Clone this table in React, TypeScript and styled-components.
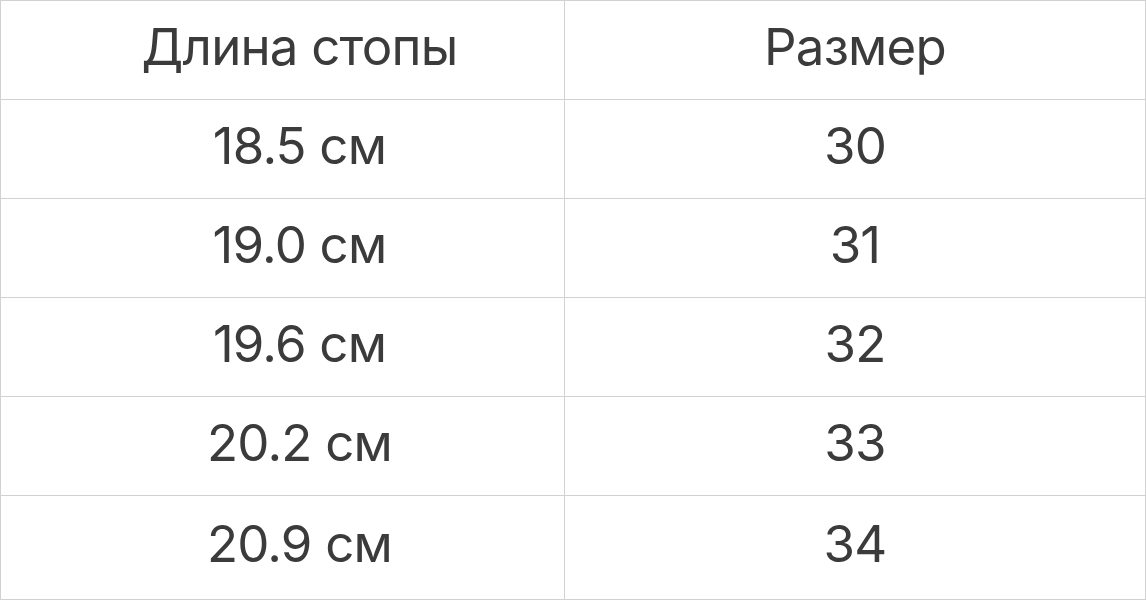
import React from 'react';
import styled, { createGlobalStyle } from 'styled-components';

const GlobalStyle = createGlobalStyle`
  html, body {
    margin: 0;
    padding: 0;
    background: #ffffff;
  }
  body {
    font-family: Inter, "Liberation Sans", sans-serif;
  }
`;

const Table = styled.div`
  width: 1146px;
  height: 600px;
  box-sizing: border-box;
  display: grid;
  grid-template-columns: 564px 1fr;
  grid-template-rows: repeat(5, 99px) 1fr;
  border-top: 1px solid #d2d2d2;
  border-left: 1px solid #d2d2d2;
  background: #ffffff;
`;

const Cell = styled.div<{ $left?: boolean }>`
  display: flex;
  align-items: center;
  justify-content: center;
  box-sizing: border-box;
  border-right: 1px solid #d2d2d2;
  border-bottom: 1px solid #d2d2d2;
  padding-left: ${(p) => (p.$left ? '34px' : '0')};
  padding-bottom: 8px;
  font-size: 51px;
  letter-spacing: -0.8px;
  font-weight: 400;
  color: #3b3b3b;
  white-space: nowrap;
`;

const rows: [string, string][] = [
  ['18.5 см', '30'],
  ['19.0 см', '31'],
  ['19.6 см', '32'],
  ['20.2 см', '33'],
  ['20.9 см', '34'],
];

const App: React.FC = () => {
  return (
    <>
      <GlobalStyle />
      <Table>
        <Cell $left>Длина стопы</Cell>
        <Cell>Размер</Cell>
        {rows.map(([len, size]) => (
          <React.Fragment key={size}>
            <Cell $left>{len}</Cell>
            <Cell>{size}</Cell>
          </React.Fragment>
        ))}
      </Table>
    </>
  );
};

export default App;
